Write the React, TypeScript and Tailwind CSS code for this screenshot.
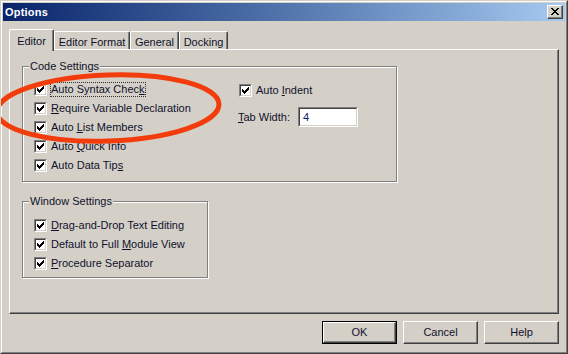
import React from "react";

const CHECK: [number, number][] = [
  [6, 0], [5, 1], [6, 1], [0, 2], [4, 2], [5, 2], [6, 2], [0, 3], [1, 3], [3, 3], [4, 3], [5, 3],
  [0, 4], [1, 4], [2, 4], [3, 4], [4, 4], [1, 5], [2, 5], [3, 5], [2, 6],
];
const checkPath = CHECK.map(([x, y]) => `M${x} ${y}h1v1h-1z`).join("");

const XGLYPH: [number, number][] = [
  [0, 0], [1, 0], [6, 0], [7, 0],
  [1, 1], [2, 1], [5, 1], [6, 1],
  [2, 2], [3, 2], [4, 2], [5, 2],
  [3, 3], [4, 3],
  [2, 4], [3, 4], [4, 4], [5, 4],
  [1, 5], [2, 5], [5, 5], [6, 5],
  [0, 6], [1, 6], [6, 6], [7, 6],
];
const xPath = XGLYPH.map(([x, y]) => `M${x} ${y}h1v1h-1z`).join("");

function Box() {
  return (
    <span className="flex w-[13px] h-[13px] shrink-0 border border-t-[#808080] border-l-[#808080] border-b-white border-r-white">
      <span className="flex flex-1 border border-t-[#404040] border-l-[#404040] border-b-[#d4d0c8] border-r-[#d4d0c8] bg-white">
        <svg width="7" height="7" viewBox="0 0 7 7" className="ml-[1px] mt-[1px]" shapeRendering="crispEdges">
          <path d={checkPath} fill="#000" />
        </svg>
      </span>
    </span>
  );
}

function Row({ children, focus = false }: { children: React.ReactNode; focus?: boolean }) {
  return (
    <div className="flex items-start h-[19px]">
      <Box />
      <span
        className={
          focus
            ? "ml-[3px] -mt-px leading-[13px] border border-dotted border-[#303030] whitespace-nowrap"
            : "ml-[3px] -mt-px leading-[13px] border border-transparent whitespace-nowrap"
        }
      >
        {children}
      </span>
    </div>
  );
}

function U({ children }: { children: React.ReactNode }) {
  return <span className="underline decoration-1 underline-offset-[1px]">{children}</span>;
}

function Group({
  label,
  className,
  children,
}: {
  label: string;
  className: string;
  children: React.ReactNode;
}) {
  return (
    <div className={"relative border border-[#808080] shadow-[inset_1px_1px_0_#ffffff,1px_1px_0_#ffffff] " + className}>
      <span className="absolute left-[6px] -top-[7px] px-[1px] bg-[#d4d0c8] leading-[13px] whitespace-nowrap">
        {label}
      </span>
      {children}
    </div>
  );
}

function Button({ children, def = false }: { children: React.ReactNode; def?: boolean }) {
  if (def) {
    return (
      <div className="flex w-[75px] h-[23px] border border-black">
        <div className="flex flex-1 items-center justify-center border border-t-white border-l-white border-b-[#404040] border-r-[#404040] shadow-[inset_-1px_-1px_0_#808080] leading-[13px]">
          {children}
        </div>
      </div>
    );
  }
  return (
    <div className="flex w-[75px] h-[23px] items-center justify-center border border-t-white border-l-white border-b-[#404040] border-r-[#404040] shadow-[inset_-1px_-1px_0_#808080] leading-[13px]">
      {children}
    </div>
  );
}

export default function App() {
  return (
    <div className="relative w-[568px] h-[354px] overflow-hidden bg-[#d4d0c8] text-[11px] text-[#10102c] font-['Liberation_Sans',Arial,sans-serif] border border-t-[#d4d0c8] border-l-[#d4d0c8] border-b-[#404040] border-r-[#404040]">
      <div className="flex flex-col h-full border border-t-white border-l-white border-b-[#808080] border-r-[#808080] p-[1px]">
        {/* Title bar */}
        <div className="flex items-center h-[18px] shrink-0 bg-gradient-to-r from-[#0a246a] to-[#a6caf0]">
          <span className="pl-[2px] pt-[1px] flex-1 font-bold text-white leading-[13px] tracking-[0.2px]">Options</span>
          <div className="flex items-start w-[16px] h-[14px] mr-[2px] bg-[#d4d0c8] border border-t-white border-l-white border-b-[#404040] border-r-[#404040] shadow-[inset_-1px_-1px_0_#808080]">
            <svg width="8" height="7" viewBox="0 0 8 7" className="ml-[3px] mt-[2px]" shapeRendering="crispEdges">
              <path d={xPath} fill="#000" />
            </svg>
          </div>
        </div>

        <div className="flex flex-col px-[6px] pt-[8px]">
          {/* Tabs */}
          <div className="flex items-end h-[20px]">
            <div className="relative z-10 flex justify-center pt-[5px] w-[45px] h-[22px] -mb-[2px] bg-[#d4d0c8] border-l border-t border-r border-l-white border-t-white border-r-[#404040] shadow-[inset_-1px_0_0_#808080] rounded-t-[2px] leading-[13px]">
              Editor
            </div>
            <div className="flex justify-center pt-[4px] w-[76px] h-[18px] border-l border-t border-r border-l-white border-t-white border-r-[#404040] shadow-[inset_-1px_0_0_#808080] rounded-t-[2px] leading-[13px] whitespace-nowrap">
              Editor Format
            </div>
            <div className="flex justify-center pt-[4px] w-[49px] h-[18px] border-l border-t border-r border-l-white border-t-white border-r-[#404040] shadow-[inset_-1px_0_0_#808080] rounded-t-[2px] leading-[13px]">
              General
            </div>
            <div className="flex justify-center pt-[4px] w-[49px] h-[18px] border-l border-t border-r border-l-white border-t-white border-r-[#404040] shadow-[inset_-1px_0_0_#808080] rounded-t-[2px] leading-[13px]">
              Docking
            </div>
          </div>

          {/* Panel */}
          <div className="flex flex-col w-[550px] h-[265px] pl-[12px] pt-[16px] border border-t-white border-l-white border-b-[#404040] border-r-[#404040] shadow-[inset_-1px_-1px_0_#808080]">
            <Group label="Code Settings" className="w-[375px] h-[116px]">
              <div className="flex pl-[11px] pt-[16px]">
                <div className="flex flex-col w-[205px]">
                  <Row focus>
                    Auto Syntax Chec<U>k</U>
                  </Row>
                  <Row>
                    <U>R</U>equire Variable Declaration
                  </Row>
                  <Row>
                    Auto <U>L</U>ist Members
                  </Row>
                  <Row>
                    Auto <U>Q</U>uick Info
                  </Row>
                  <Row>
                    Auto Data Tip<U>s</U>
                  </Row>
                </div>
                <div className="flex flex-col pt-[1px]">
                  <div className="flex items-start h-[13px]">
                    <Box />
                    <span className="ml-[3px] -mt-px leading-[13px] border border-transparent whitespace-nowrap">
                      Auto <U>I</U>ndent
                    </span>
                  </div>
                  <div className="flex items-center h-[20px] mt-[10px] -ml-[1px]">
                    <span className="w-[60px] leading-[13px] whitespace-nowrap">
                      <U>T</U>ab Width:
                    </span>
                    <div className="flex w-[60px] h-[20px] border border-t-[#808080] border-l-[#808080] border-b-white border-r-white">
                      <div className="flex flex-1 items-center pl-[3px] bg-white border border-t-[#404040] border-l-[#404040] border-b-[#d4d0c8] border-r-[#d4d0c8] leading-[13px] text-[#0a1a6a]">
                        4
                      </div>
                    </div>
                  </div>
                </div>
              </div>
            </Group>

            <Group label="Window Settings" className="w-[186px] h-[77px] mt-[19px]">
              <div className="flex flex-col pl-[11px] pt-[17px]">
                <Row>
                  <U>D</U>rag-and-Drop Text Editing
                </Row>
                <Row>
                  Default to Full <U>M</U>odule View
                </Row>
                <Row>
                  <U>P</U>rocedure Separator
                </Row>
              </div>
            </Group>
          </div>

          {/* Buttons */}
          <div className="flex justify-end gap-[6px] mt-[7px]">
            <Button def>OK</Button>
            <Button>Cancel</Button>
            <Button>Help</Button>
          </div>
        </div>
      </div>

      {/* Red hand-drawn ellipse annotation */}
      <svg
        className="absolute left-0 top-0 pointer-events-none z-20"
        width="568"
        height="354"
        viewBox="0 0 568 354"
      >
        <ellipse
          cx="107"
          cy="107"
          rx="111"
          ry="33"
          transform="rotate(-2 107 107)"
          fill="none"
          stroke="#f23c0c"
          strokeWidth="5"
        />
      </svg>
    </div>
  );
}
